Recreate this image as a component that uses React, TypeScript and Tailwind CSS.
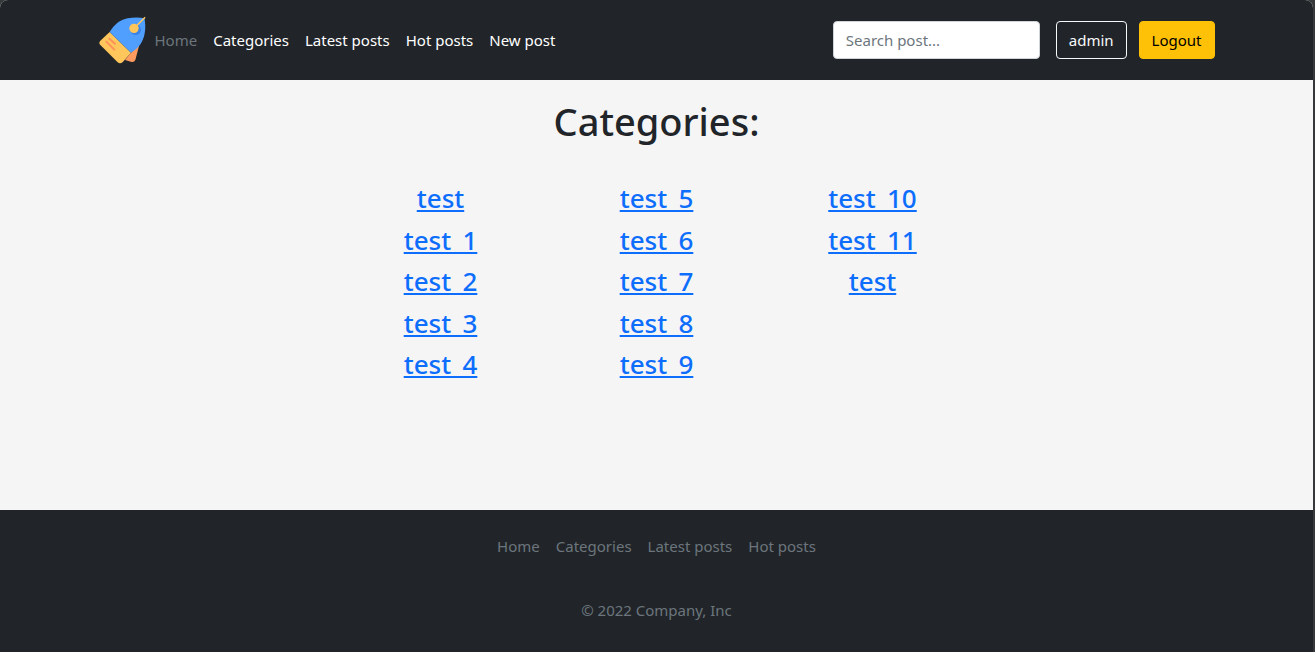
const navLinks = ['Categories', 'Latest posts', 'Hot posts', 'New post'];
const footerLinks = ['Home', 'Categories', 'Latest posts', 'Hot posts'];
const categories = [
  'test', 'test_1', 'test_2', 'test_3', 'test_4', 'test_5', 'test_6',
  'test_7', 'test_8', 'test_9', 'test_10', 'test_11', 'test',
];

function Logo() {
  return (
    <svg viewBox="26 32 144 144" className="size-12" aria-hidden="true">
      <path d="M122 142 147 118 135 164Q132 171 124 170L104 164Z" fill="#ff9b5e" />
      <path d="M58 80 122 142 98 169Q90 177 82 171L30 119Q24 113 30 106Z" fill="#ffc65c" />
      <path d="M58 80C72 58 89 43 112 39C130 36 148 36 162 39C167 60 165 84 158 102C150 122 138 132 122 142Z" fill="#509fff" />
      <circle cx="136" cy="73" r="16" fill="#3b82e8" />
      <circle cx="131" cy="69" r="14" fill="#ffc65c" />
      <path d="M131 69 163 37" stroke="#ffc65c" strokeWidth="4.5" strokeLinecap="round" />
      <path d="M57 100 74 115M48 109 72 133" stroke="#ff9259" strokeWidth="6" strokeLinecap="round" />
    </svg>
  );
}

export default function App() {
  return (
    <div className="min-h-screen bg-[#37383a] pr-0.5 font-['Noto_Sans',sans-serif] text-[15px] leading-6 text-[#212529]">
      <div className="flex min-h-screen flex-col overflow-hidden rounded-t-lg bg-[#f5f5f5]">
        <header className="bg-[#212529] py-4 text-white">
          <div className="mx-auto flex max-w-[1140px] items-center px-3">
            <a href="#home" aria-label="Start page">
              <Logo />
            </a>
            <nav aria-label="Main" className="flex grow">
              <a href="#home" className="p-2 text-[#6c757d]">Home</a>
              {navLinks.map((label) => (
                <a key={label} href="#section" className="p-2">{label}</a>
              ))}
            </nav>
            <form role="search" className="mr-4" onSubmit={(e) => e.preventDefault()}>
              <input
                type="search"
                aria-label="Search post"
                placeholder="Search post..."
                className="block h-[38px] w-[207px] rounded border border-[#ced4da] bg-white px-3 text-[#212529] placeholder:text-[#6c757d]"
              />
            </form>
            <div className="flex gap-3">
              <button type="button" className="h-[38px] rounded border border-[#f8f9fa] px-3 text-[#f8f9fa]">admin</button>
              <button type="button" className="h-[38px] rounded border border-[#ffc107] bg-[#ffc107] px-3 text-black">Logout</button>
            </div>
          </div>
        </header>

        <main className="grow pt-4 pb-[110px] text-center">
          <h1 className="text-[38px] leading-[50px] font-medium">Categories:</h1>
          <ul className="mx-auto mt-[35px] grid h-52 max-w-[648px] grid-flow-col grid-cols-3 grid-rows-5">
            {categories.map((name, index) => (
              <li key={index}>
                <a
                  href="#category"
                  className="text-[26px] leading-[34px] font-medium text-[#0d6efd] underline decoration-2 underline-offset-2 [text-decoration-skip-ink:none]"
                >
                  {name}
                </a>
              </li>
            ))}
          </ul>
        </main>

        <footer className="bg-[#212529] pt-4 pb-[30px] text-center text-[#6c757d]">
          <nav aria-label="Footer" className="mb-8 flex justify-center">
            {footerLinks.map((label) => (
              <a key={label} href="#section" className="p-2">{label}</a>
            ))}
          </nav>
          <p>© 2022 Company, Inc</p>
        </footer>
      </div>
    </div>
  );
}
